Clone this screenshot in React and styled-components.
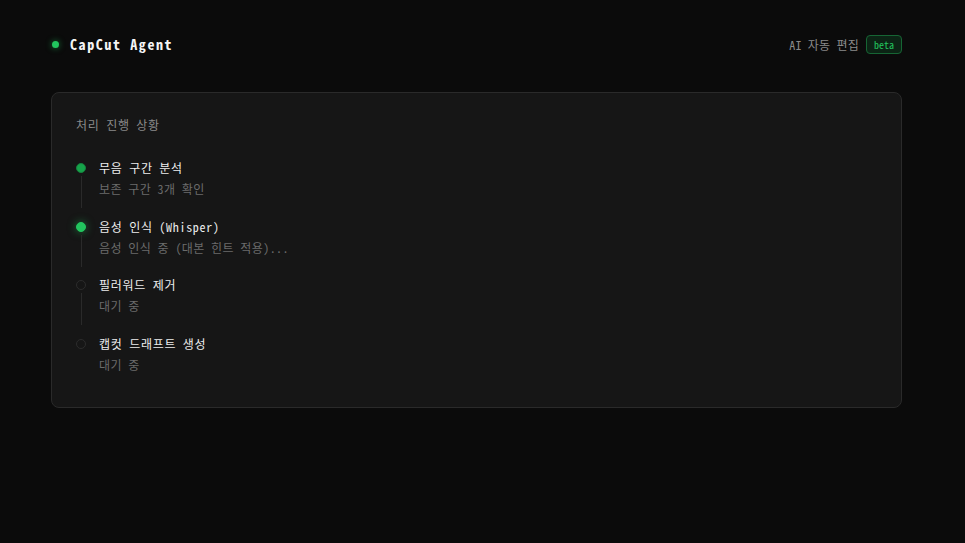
import React from "react";
import styled, { createGlobalStyle, css } from "styled-components";

const Global = createGlobalStyle`
  html, body { margin: 0; padding: 0; background: #0b0b0b; }
  body {
    font-family: "Noto Sans Mono CJK KR", "DejaVu Sans Mono", "Noto Sans CJK KR", monospace;
    color: #e5e5e5;
    min-height: 543px;
  }
  * { box-sizing: border-box; }
`;

const Page = styled.div`
  width: 851px;
  margin-left: 51px;
  padding-top: 32px;
`;

const Header = styled.header`
  height: 24px;
  display: flex;
  align-items: center;
  justify-content: space-between;
  margin-bottom: 36px;
`;

const Brand = styled.div`
  display: flex;
  align-items: center;
  gap: 11px;
`;

const BrandDot = styled.span`
  width: 7px;
  height: 7px;
  border-radius: 50%;
  background: #22c55e;
  box-shadow: 0 0 6px rgba(34, 197, 94, 0.6);
  margin-left: 1px;
`;

const Title = styled.h1`
  margin: 0;
  font-size: 14px;
  font-weight: 700;
  color: #f5f5f5;
  letter-spacing: 1.6px;
`;

const Meta = styled.div`
  display: flex;
  align-items: center;
  gap: 7px;
  font-size: 12px;
  color: #8a8a8a;
  letter-spacing: 0.2px;
`;

const Badge = styled.span`
  height: 19px;
  padding: 0 7px;
  display: inline-flex;
  align-items: center;
  border: 1px solid #166534;
  border-radius: 4px;
  background: #0c2415;
  color: #22c55e;
  font-size: 10px;
  letter-spacing: 0;
`;

const Card = styled.section`
  background: #161616;
  border: 1px solid #2a2a2a;
  border-radius: 8px;
  padding: 24px 24px 14px;
`;

const CardTitle = styled.h2`
  margin: 0 0 26px;
  font-size: 12px;
  line-height: 16px;
  font-weight: 400;
  color: #8a8a8a;
  letter-spacing: 0.7px;
`;

const Steps = styled.ol`
  list-style: none;
  margin: 0;
  padding: 0;
`;

const Step = styled.li`
  display: grid;
  grid-template-columns: 10px 1fr;
  column-gap: 13px;
  padding-bottom: 19.5px;
`;

const Rail = styled.div`
  display: flex;
  flex-direction: column;
  align-items: center;
  padding-top: 4px;
  margin-bottom: -10px;
`;

const dotStyles = {
  done: css`
    background: #16a34a;
    border: 1px solid #15803d;
  `,
  active: css`
    background: #22c55e;
    border: 1px solid #22c55e;
    box-shadow: 0 0 8px rgba(34, 197, 94, 0.55);
  `,
  pending: css`
    background: transparent;
    border: 1px solid #2c2c2c;
  `,
};

const Dot = styled.span`
  width: 10px;
  height: 10px;
  border-radius: 50%;
  flex: none;
  ${(p) => dotStyles[p.$status]}
`;

const Line = styled.span`
  width: 1px;
  flex: 1;
  margin-top: 3px;
  background: #2a2a2a;
  visibility: ${(p) => (p.$hidden ? "hidden" : "visible")};
`;

const Body = styled.div`
  display: flex;
  flex-direction: column;
  gap: 3px;
`;

const StepName = styled.div`
  font-size: 12px;
  line-height: 18px;
  color: #ededed;
  letter-spacing: 0.7px;
`;

const StepDesc = styled.div`
  font-size: 12px;
  line-height: 18px;
  color: #6b6b6b;
  letter-spacing: 0.4px;
`;

const steps = [
  { name: "무음 구간 분석", desc: "보존 구간 3개 확인", status: "done" },
  { name: "음성 인식 (Whisper)", desc: "음성 인식 중 (대본 힌트 적용)...", status: "active" },
  { name: "필러워드 제거", desc: "대기 중", status: "pending" },
  { name: "캡컷 드래프트 생성", desc: "대기 중", status: "pending" },
];

export default function App() {
  return (
    <>
      <Global />
      <Page>
        <Header>
          <Brand>
            <BrandDot />
            <Title>CapCut Agent</Title>
          </Brand>
          <Meta>
            <span>AI 자동 편집</span>
            <Badge>beta</Badge>
          </Meta>
        </Header>
        <Card>
          <CardTitle>처리 진행 상황</CardTitle>
          <Steps>
            {steps.map((s, i) => (
              <Step key={s.name}>
                <Rail>
                  <Dot $status={s.status} />
                  <Line $hidden={i === steps.length - 1} />
                </Rail>
                <Body>
                  <StepName>{s.name}</StepName>
                  <StepDesc>{s.desc}</StepDesc>
                </Body>
              </Step>
            ))}
          </Steps>
        </Card>
      </Page>
    </>
  );
}
